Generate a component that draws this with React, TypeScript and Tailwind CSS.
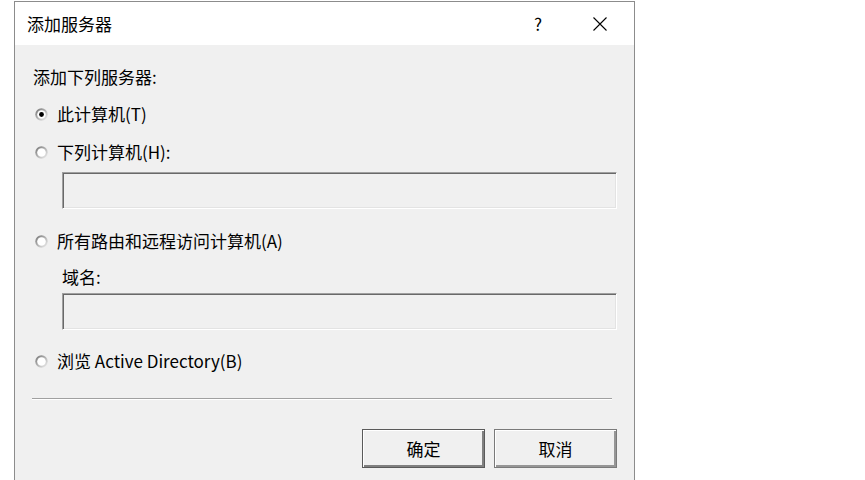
import React from "react";

const font = { fontFamily: '"Noto Sans CJK SC", "Noto Sans", sans-serif' };

function Radio({ checked }: { checked?: boolean }) {
  return (
    <svg width="13" height="13" viewBox="0 0 13 13" className="shrink-0">
      <defs>
        <linearGradient id={checked ? "rg1" : "rg0"} x1="0" y1="0" x2="1" y2="1">
          <stop offset="0" stopColor="#6e6e6e" />
          <stop offset="0.5" stopColor="#b4b4b4" />
          <stop offset="1" stopColor="#f4f4f4" />
        </linearGradient>
      </defs>
      <circle cx="6.5" cy="6.5" r="6.2" fill={checked ? "url(#rg1)" : "url(#rg0)"} />
      <circle cx="6.5" cy="6.5" r="4.3" fill="#ffffff" />
      {checked && <circle cx="6.5" cy="6.5" r="2.4" fill="#000000" />}
    </svg>
  );
}

function RadioRow({ label, checked, className }: { label: string; checked?: boolean; className: string }) {
  return (
    <div className={`flex items-center h-[24px] pl-[20px] ${className}`}>
      <Radio checked={checked} />
      <span className="ml-[9px] text-[17px] leading-[24px] text-black">{label}</span>
    </div>
  );
}

function SunkenInput({ className }: { className: string }) {
  return (
    <div
      className={`ml-[47px] w-[555px] h-[37px] bg-[#f0f0f0] border-t border-l border-[#a0a0a0] border-b border-r border-b-white border-r-white shadow-[inset_1px_1px_0_#696969,inset_-1px_-1px_0_#e3e3e3] ${className}`}
    />
  );
}

function DialogButton({ label, isDefault }: { label: string; isDefault?: boolean }) {
  return (
    <button
      type="button"
      className={`w-[123px] h-[39px] bg-[#f0f0f0] text-[17px] text-black border ${
        isDefault
          ? "border-[#5a5a5a] shadow-[inset_1px_1px_0_#ffffff,inset_-2px_-2px_0_#808080]"
          : "border-[#7a7a7a] shadow-[inset_1px_1px_0_#ffffff,inset_-2px_-2px_0_#969696]"
      }`}
      style={font}
    >
      {label}
    </button>
  );
}

export default function App() {
  return (
    <div className="w-[865px] h-[480px] bg-white overflow-hidden pt-px pl-[14px]" style={font}>
      <div className="w-[621px] h-[490px] border border-[#8c8c8c] bg-[#f0f0f0] flex flex-col">
        {/* Title bar */}
        <div className="h-[43px] bg-white flex items-center pl-[12px] shrink-0">
          <span className="text-[17px] text-black leading-none">添加服务器</span>
          <span className="ml-auto text-[17px] text-black leading-none mr-[51px]">?</span>
          <svg width="14" height="14" viewBox="0 0 14 14" className="mr-[27px]">
            <path d="M0.5 0.5 L13.5 13.5 M13.5 0.5 L0.5 13.5" stroke="#000" strokeWidth="1.1" fill="none" />
          </svg>
        </div>

        {/* Body */}
        <div className="flex flex-col">
          <div className="mt-[20px] h-[24px] flex items-center pl-[18px] text-[17px] text-black">
            添加下列服务器:
          </div>
          <RadioRow className="mt-[13px]" label="此计算机(T)" checked />
          <RadioRow className="mt-[14px]" label="下列计算机(H):" />
          <SunkenInput className="mt-[8px]" />
          <RadioRow className="mt-[20px]" label="所有路由和远程访问计算机(A)" />
          <div className="mt-[12px] h-[24px] flex items-center pl-[47px] text-[17px] text-black">域名:</div>
          <SunkenInput className="mt-[4px]" />
          <RadioRow className="mt-[19px]" label="浏览 Active Directory(B)" />

          {/* Separator */}
          <div className="mt-[25px] ml-[17px] w-[580px] h-[2px] border-t border-[#a0a0a0] border-b border-b-white" />

          {/* Buttons */}
          <div className="mt-[29px] flex gap-[9px] pl-[347px]">
            <DialogButton label="确定" isDefault />
            <DialogButton label="取消" />
          </div>
        </div>
      </div>
    </div>
  );
}
